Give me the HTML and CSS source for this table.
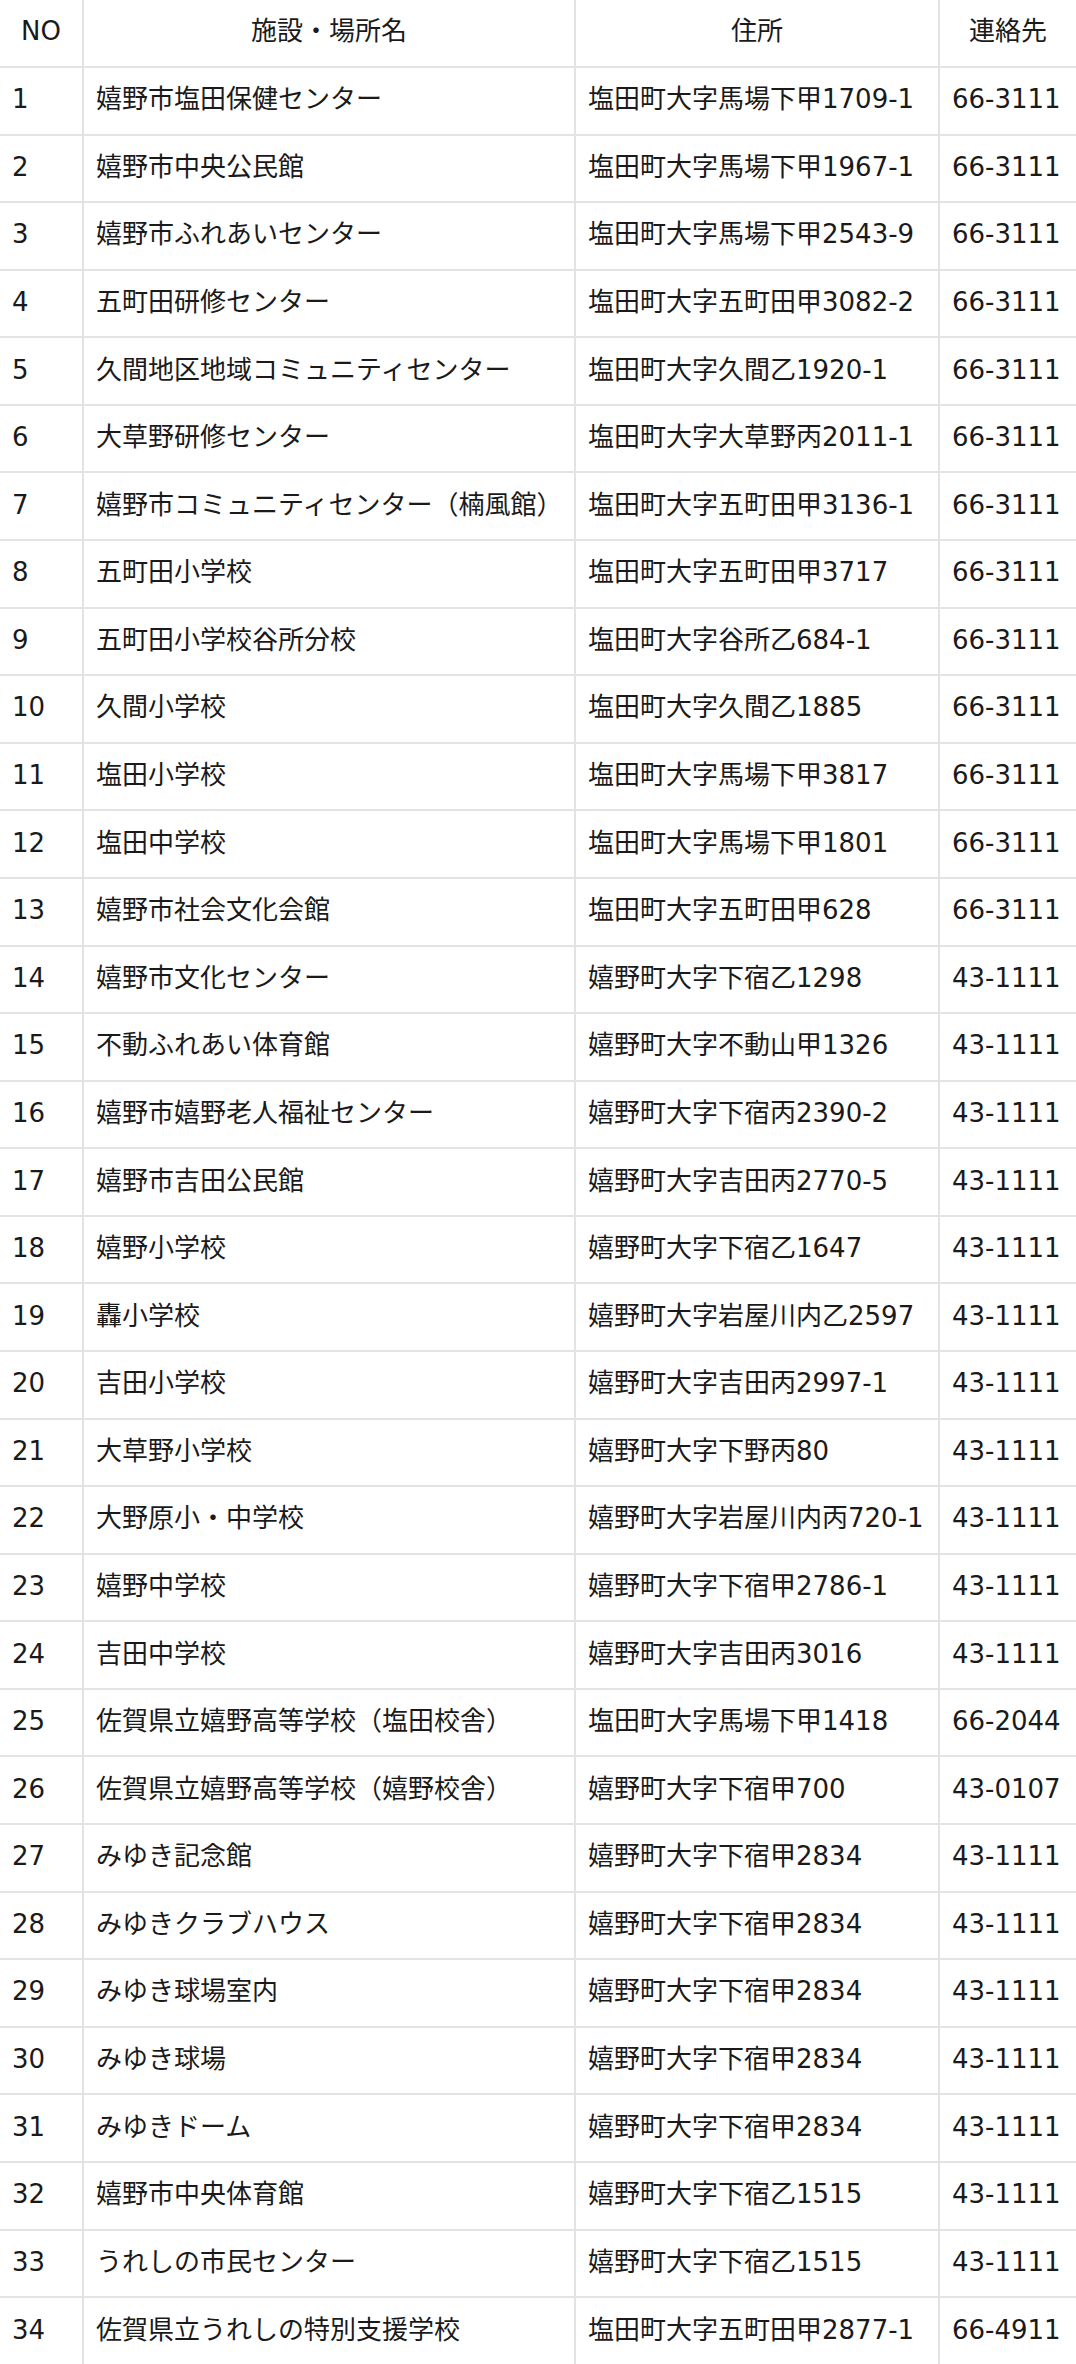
FILE: index.html
```html
<!DOCTYPE html>
<html lang="ja">
<head>
  <meta charset="UTF-8" />
  <title>避難所一覧</title>
  <meta name="viewport" content="width=device-width, initial-scale=1" />
  <link rel="stylesheet" href="styles.css">
</head>
<body>

  <table class="shelter-table">
    <colgroup>
      <col class="col-no">
      <col class="col-name">
      <col class="col-address">
      <col class="col-tel">
    </colgroup>
    <thead>
      <tr>
        <th>NO</th>
        <th>施設・場所名</th>
        <th>住所</th>
        <th>連絡先</th>
      </tr>
    </thead>
    <tbody>
      <tr><td>1</td><td>嬉野市塩田保健センター</td><td>塩田町大字馬場下甲1709-1</td><td>66-3111</td></tr>
      <tr><td>2</td><td>嬉野市中央公民館</td><td>塩田町大字馬場下甲1967-1</td><td>66-3111</td></tr>
      <tr><td>3</td><td>嬉野市ふれあいセンター</td><td>塩田町大字馬場下甲2543-9</td><td>66-3111</td></tr>
      <tr><td>4</td><td>五町田研修センター</td><td>塩田町大字五町田甲3082-2</td><td>66-3111</td></tr>
      <tr><td>5</td><td>久間地区地域コミュニティセンター</td><td>塩田町大字久間乙1920-1</td><td>66-3111</td></tr>
      <tr><td>6</td><td>大草野研修センター</td><td>塩田町大字大草野丙2011-1</td><td>66-3111</td></tr>
      <tr><td>7</td><td>嬉野市コミュニティセンター（楠風館）</td><td>塩田町大字五町田甲3136-1</td><td>66-3111</td></tr>
      <tr><td>8</td><td>五町田小学校</td><td>塩田町大字五町田甲3717</td><td>66-3111</td></tr>
      <tr><td>9</td><td>五町田小学校谷所分校</td><td>塩田町大字谷所乙684-1</td><td>66-3111</td></tr>
      <tr><td>10</td><td>久間小学校</td><td>塩田町大字久間乙1885</td><td>66-3111</td></tr>
      <tr><td>11</td><td>塩田小学校</td><td>塩田町大字馬場下甲3817</td><td>66-3111</td></tr>
      <tr><td>12</td><td>塩田中学校</td><td>塩田町大字馬場下甲1801</td><td>66-3111</td></tr>
      <tr><td>13</td><td>嬉野市社会文化会館</td><td>塩田町大字五町田甲628</td><td>66-3111</td></tr>
      <tr><td>14</td><td>嬉野市文化センター</td><td>嬉野町大字下宿乙1298</td><td>43-1111</td></tr>
      <tr><td>15</td><td>不動ふれあい体育館</td><td>嬉野町大字不動山甲1326</td><td>43-1111</td></tr>
      <tr><td>16</td><td>嬉野市嬉野老人福祉センター</td><td>嬉野町大字下宿丙2390-2</td><td>43-1111</td></tr>
      <tr><td>17</td><td>嬉野市吉田公民館</td><td>嬉野町大字吉田丙2770-5</td><td>43-1111</td></tr>
      <tr><td>18</td><td>嬉野小学校</td><td>嬉野町大字下宿乙1647</td><td>43-1111</td></tr>
      <tr><td>19</td><td>轟小学校</td><td>嬉野町大字岩屋川内乙2597</td><td>43-1111</td></tr>
      <tr><td>20</td><td>吉田小学校</td><td>嬉野町大字吉田丙2997-1</td><td>43-1111</td></tr>
      <tr><td>21</td><td>大草野小学校</td><td>嬉野町大字下野丙80</td><td>43-1111</td></tr>
      <tr><td>22</td><td>大野原小・中学校</td><td>嬉野町大字岩屋川内丙720-1</td><td>43-1111</td></tr>
      <tr><td>23</td><td>嬉野中学校</td><td>嬉野町大字下宿甲2786-1</td><td>43-1111</td></tr>
      <tr><td>24</td><td>吉田中学校</td><td>嬉野町大字吉田丙3016</td><td>43-1111</td></tr>
      <tr><td>25</td><td>佐賀県立嬉野高等学校（塩田校舎）</td><td>塩田町大字馬場下甲1418</td><td>66-2044</td></tr>
      <tr><td>26</td><td>佐賀県立嬉野高等学校（嬉野校舎）</td><td>嬉野町大字下宿甲700</td><td>43-0107</td></tr>
      <tr><td>27</td><td>みゆき記念館</td><td>嬉野町大字下宿甲2834</td><td>43-1111</td></tr>
      <tr><td>28</td><td>みゆきクラブハウス</td><td>嬉野町大字下宿甲2834</td><td>43-1111</td></tr>
      <tr><td>29</td><td>みゆき球場室内</td><td>嬉野町大字下宿甲2834</td><td>43-1111</td></tr>
      <tr><td>30</td><td>みゆき球場</td><td>嬉野町大字下宿甲2834</td><td>43-1111</td></tr>
      <tr><td>31</td><td>みゆきドーム</td><td>嬉野町大字下宿甲2834</td><td>43-1111</td></tr>
      <tr><td>32</td><td>嬉野市中央体育館</td><td>嬉野町大字下宿乙1515</td><td>43-1111</td></tr>
      <tr><td>33</td><td>うれしの市民センター</td><td>嬉野町大字下宿乙1515</td><td>43-1111</td></tr>
      <tr><td>34</td><td>佐賀県立うれしの特別支援学校</td><td>塩田町大字五町田甲2877-1</td><td>66-4911</td></tr>
    </tbody>
  </table>

</body>
</html>
```

FILE: styles.css
```css
body {
  margin: 0;
  background: #fff;
  color: #1a1a1a;
  font-family: "DejaVu Sans", "Noto Sans CJK JP", sans-serif;
  font-size: 26px;
}

.shelter-table {
  width: 1076px;
  table-layout: fixed;
  border-collapse: collapse;
  border-style: hidden;
}

.col-no { width: 83px; }
.col-name { width: 492px; }
.col-address { width: 364px; }
.col-tel { width: 137px; }

.shelter-table th,
.shelter-table td {
  border: 2px solid #e3e3e3;
  padding: 0 12px 3px;
  height: 67.58px;
  box-sizing: border-box;
  line-height: 30px;
  white-space: nowrap;
  vertical-align: middle;
  text-align: left;
}

.shelter-table th {
  height: 67px;
  padding-bottom: 5px;
  font-weight: normal;
  text-align: center;
}
```
